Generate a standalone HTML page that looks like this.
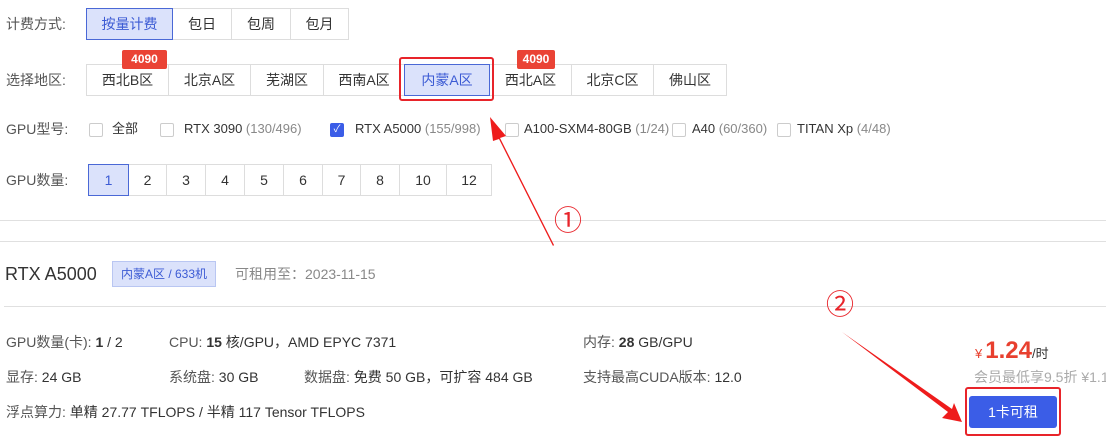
<!DOCTYPE html><html><head><meta charset="utf-8"><style>
body{margin:0;width:1106px;height:437px;background:#fff;position:relative;overflow:hidden;font-family:"Liberation Sans","Noto Sans CJK SC",sans-serif;font-size:14px;line-height:16px;color:#333}
.a{position:absolute;white-space:nowrap}
.lbl{color:#555}
.b{position:absolute;border:1px solid #ddd;box-sizing:border-box;display:flex;align-items:center;justify-content:center;background:#fff;color:#333}
.s{background:#dbe2fb;border-color:#4a68d6;color:#3c5bd4;z-index:2}
.badge{position:absolute;background:#ea4335;color:#fff;font-weight:bold;font-size:12px;height:19px;line-height:19px;text-align:center;border-radius:2px;z-index:3}
.cb{position:absolute;width:12px;height:12px;border:1px solid #ccc;border-radius:2px;background:#fff}
.hr{position:absolute;height:1px;background:#e0e0e0}
.g{color:#888}
.c{font-size:13px}
</style></head><body>
<div class="a lbl" style="left:6px;top:16px">计费方式:</div>
<div class="b s" style="left:86px;top:8px;width:87px;height:32px">按量计费</div>
<div class="b" style="left:172px;top:8px;width:60px;height:32px">包日</div>
<div class="b" style="left:231px;top:8px;width:60px;height:32px">包周</div>
<div class="b" style="left:290px;top:8px;width:59px;height:32px">包月</div>

<div class="a lbl" style="left:6px;top:72px">选择地区:</div>
<div class="b" style="left:86px;top:64px;width:83px;height:32px">西北B区</div>
<div class="b" style="left:168px;top:64px;width:83px;height:32px">北京A区</div>
<div class="b" style="left:250px;top:64px;width:74px;height:32px">芜湖区</div>
<div class="b" style="left:323px;top:64px;width:82px;height:32px">西南A区</div>
<div class="b s" style="left:404px;top:64px;width:86px;height:32px">内蒙A区</div>
<div class="b" style="left:489px;top:64px;width:83px;height:32px">西北A区</div>
<div class="b" style="left:571px;top:64px;width:83px;height:32px">北京C区</div>
<div class="b" style="left:653px;top:64px;width:74px;height:32px">佛山区</div>
<div class="badge" style="left:122px;top:50px;width:45px">4090</div>
<div class="badge" style="left:517px;top:50px;width:38px">4090</div>
<div class="a" style="left:399px;top:57px;width:91px;height:40px;border:2.5px solid #e8242a;border-radius:3px;z-index:4"></div>

<div class="a lbl" style="left:6px;top:121px">GPU型号:</div>
<div class="cb" style="left:89px;top:123px"></div><div class="a c" style="left:112px;top:121px">全部</div>
<div class="cb" style="left:160px;top:123px"></div><div class="a c" style="left:184px;top:121px">RTX 3090 <span class="g">(130/496)</span></div>
<div class="cb" style="left:330px;top:123px;background:#3b5de7;border-color:#3b5de7;color:#fff;font-size:10px;line-height:12px;text-align:center">✓</div><div class="a c" style="left:355px;top:121px">RTX A5000 <span class="g">(155/998)</span></div>
<div class="cb" style="left:505px;top:123px"></div><div class="a c" style="left:524px;top:121px">A100-SXM4-80GB <span class="g">(1/24)</span></div>
<div class="cb" style="left:672px;top:123px"></div><div class="a c" style="left:692px;top:121px">A40 <span class="g">(60/360)</span></div>
<div class="cb" style="left:777px;top:123px"></div><div class="a c" style="left:797px;top:121px">TITAN Xp <span class="g">(4/48)</span></div>

<div class="a lbl" style="left:6px;top:172px">GPU数量:</div>
<div class="b s" style="left:88px;top:164px;width:41px;height:32px">1</div>
<div class="b" style="left:128px;top:164px;width:39px;height:32px">2</div>
<div class="b" style="left:166px;top:164px;width:40px;height:32px">3</div>
<div class="b" style="left:205px;top:164px;width:40px;height:32px">4</div>
<div class="b" style="left:244px;top:164px;width:40px;height:32px">5</div>
<div class="b" style="left:283px;top:164px;width:40px;height:32px">6</div>
<div class="b" style="left:322px;top:164px;width:39px;height:32px">7</div>
<div class="b" style="left:360px;top:164px;width:40px;height:32px">8</div>
<div class="b" style="left:399px;top:164px;width:48px;height:32px">10</div>
<div class="b" style="left:446px;top:164px;width:46px;height:32px">12</div>

<div class="hr" style="left:0;top:220px;width:1106px"></div>
<div class="hr" style="left:0;top:241px;width:1106px"></div>
<div class="a" style="left:5px;top:264px;font-size:18px;line-height:20px;color:#333">RTX A5000</div>
<div class="a" style="left:112px;top:261px;width:104px;height:26px;background:#dbe2fb;border:1px solid #b9c6f2;box-sizing:border-box;color:#3c5bd4;font-size:12px;line-height:24px;text-align:center">内蒙A区 / 633机</div>
<div class="a g" style="left:235px;top:266px">可租用至：2023-11-15</div>
<div class="hr" style="left:4px;top:306px;width:1102px"></div>

<div class="a" style="left:6px;top:334px"><span class="lbl">GPU数量(卡):</span> <b>1</b> / 2</div>
<div class="a" style="left:169px;top:334px"><span class="lbl">CPU:</span> <b>15</b> 核/GPU，AMD EPYC 7371</div>
<div class="a" style="left:583px;top:334px"><span class="lbl">内存:</span> <b>28</b> GB/GPU</div>
<div class="a" style="left:6px;top:369px"><span class="lbl">显存:</span> 24 GB</div>
<div class="a" style="left:169px;top:369px"><span class="lbl">系统盘:</span> 30 GB</div>
<div class="a" style="left:304px;top:369px"><span class="lbl">数据盘:</span> 免费 50 GB，可扩容 484 GB</div>
<div class="a" style="left:583px;top:369px"><span class="lbl">支持最高CUDA版本:</span> 12.0</div>
<div class="a" style="left:6px;top:404px"><span class="lbl">浮点算力:</span> 单精 27.77 TFLOPS / 半精 117 Tensor TFLOPS</div>

<div class="a" style="left:975px;top:338px;line-height:26px;color:#e8402f"><span style="font-size:13px">¥</span><b style="font-size:24px;margin-left:3px">1.24</b><span style="color:#333;font-size:13px">/时</span></div>
<div class="a" style="left:974px;top:369px;color:#aaa">会员最低享9.5折 ¥1.18</div>
<div class="a" style="left:969px;top:396px;width:88px;height:32px;background:#3b5de7;border-radius:3px;color:#fff;text-align:center;line-height:32px">1卡可租</div>
<div class="a" style="left:965px;top:387px;width:92px;height:45px;border:2.5px solid #e8242a;border-radius:3px"></div>

<div class="a" style="left:554px;top:204px;font-size:28px;line-height:30px;color:#e8242a;font-family:'Noto Sans CJK SC',sans-serif">①</div>
<div class="a" style="left:826px;top:288px;font-size:28px;line-height:30px;color:#e8242a;font-family:'Noto Sans CJK SC',sans-serif">②</div>
<svg class="a" style="left:0;top:0" width="1106" height="437">
<polygon points="553,246 499,139 493,141 490,117 506,136 500,138 554,245" fill="#ee1c1c"/>
<polygon points="842,332 952,409 954,403 962,422 942,418 948,412" fill="#ee1c1c"/>
</svg>
</body></html>
